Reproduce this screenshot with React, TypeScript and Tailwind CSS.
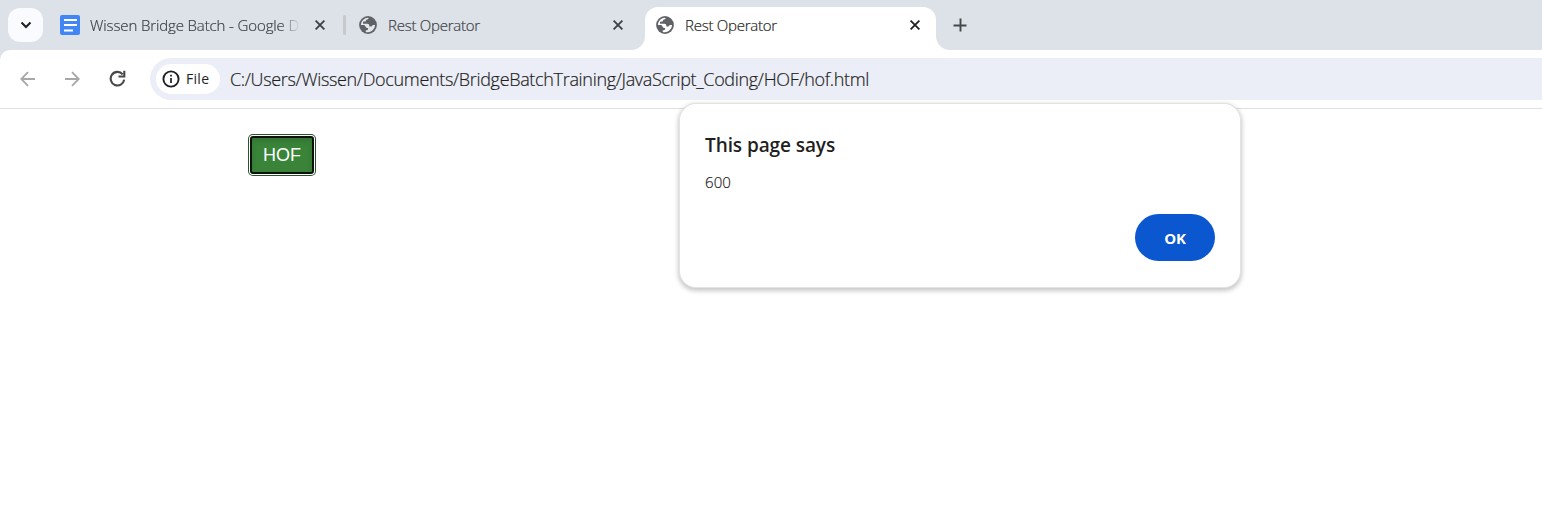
function Globe({ className }: { className: string }) {
  return (
    <svg width="18" height="18" viewBox="0 0 18 18" className={`block shrink-0 ${className}`}>
      <circle cx="9" cy="9" r="8.9" fill="#5f6368" />
      <path
        d="M9.7 1.9C9.2 3 8.600 3.500 7.400 3.700c-.6.2-.6 1-.6 1.900H5c-.7 0-1 .5-1 1.200v.9h4.300c1.500 0 2 .8 2 1.900v.9h1.800c1 0 1.400-.5 1.400-1.400h2.600A7.200 7.200 0 0 1 6.800 15.900v-1.700h1c1 0 1.300-.6 1.300-1.400V12c-1.700 0-2.500-.6-2.700-1.800L5.300 9H1.800A7.200 7.200 0 0 1 9.700 1.900z"
        fill="currentColor"
      />
    </svg>
  );
}

function Close({ className }: { className: string }) {
  return (
    <svg width="10" height="10" viewBox="0 0 10 10" className={`block shrink-0 ${className}`}>
      <path d="M.6.6l8.800 8.800M9.400.6L.6 9.400" stroke="currentColor" strokeWidth="1.800" />
    </svg>
  );
}

function TabStrip() {
  return (
    <header className="flex h-[50px] shrink-0 bg-[#dde1e8] text-[15px] leading-6 whitespace-nowrap text-[#3c3f42]">
      <button className="ml-2 mt-2 flex h-[34px] w-[35px] items-center justify-center rounded-xl bg-[#f9fbff]">
        <svg width="12" height="8" viewBox="0 0 12 8">
          <path d="M1.500 1.500L6 6l4.500-4.500" fill="none" stroke="#1f1f1f" strokeWidth="2" />
        </svg>
      </button>
      <div className="ml-[17px] flex h-[50px] w-[286px] items-center">
        <svg width="20" height="20" viewBox="0 0 20 20" className="shrink-0">
          <rect width="20" height="20" rx="2" fill="#4285f4" />
          <path d="M4 5h13M4 10h13M4 15.500h9" stroke="white" strokeWidth="2" />
        </svg>
        <span className="ml-[10px] w-[210px] shrink-0 font-light tracking-[-0.12px] [-webkit-text-stroke:0.2px] [mask-image:linear-gradient(to_right,black_190px,transparent_210px)]">
          Wissen Bridge Batch - Google D
        </span>
        <Close className="ml-[15px]" />
        <span className="ml-[18px] h-5 w-[3px] shrink-0 rounded bg-[#c8c9cb]" />
      </div>
      <div className="ml-[13px] flex h-[50px] w-[286px] items-center">
        <Globe className="text-[#e4e7eb]" />
        <span className="ml-[11px] font-light tracking-[-0.25px] [-webkit-text-stroke:0.2px]">Rest Operator</span>
        <Close className="ml-auto mr-[22px]" />
      </div>
      <div className="relative mt-[7px] flex h-[43px] w-[291px] items-center rounded-t-[13px] bg-white pb-[7px] pl-[11px]">
        <svg width="14" height="14" className="absolute -left-[14px] bottom-0">
          <path d="M14 0v14H0A14 14 0 0 0 14 0z" fill="white" />
        </svg>
        <Globe className="text-white" />
        <span className="ml-[11px] font-light tracking-[-0.25px] text-[#1f1f1f] [-webkit-text-stroke:0.2px]">Rest Operator</span>
        <Close className="ml-auto mr-4 text-[#202124]" />
        <svg width="14" height="14" className="absolute -right-[14px] bottom-0">
          <path d="M0 0v14h14A14 14 0 0 1 0 0z" fill="white" />
        </svg>
      </div>
      <svg width="14" height="14" viewBox="0 0 14 14" className="ml-[17px] mt-[18px]">
        <path d="M7.500 .5v13M.5 7.500h13" stroke="#45484b" strokeWidth="1.900" />
      </svg>
    </header>
  );
}

function Toolbar() {
  return (
    <div className="bg-[#dde1e8]">
      <nav className="flex h-[59px] items-start rounded-tl-[10px] border-b border-[#dfe0e1] bg-white pt-2">
        <svg width="16" height="16" viewBox="0 0 16 16" className="ml-5 mt-[13px]">
          <path d="M15 8H1.500M8 1.200L1.300 8 8 14.800" fill="none" stroke="#a8a8a8" strokeWidth="1.800" />
        </svg>
        <svg width="16" height="16" viewBox="0 0 16 16" className="ml-[28px] mt-[13px]">
          <path d="M1 8h13.500M8 1.200L14.700 8 8 14.800" fill="none" stroke="#a8a8a8" strokeWidth="1.800" />
        </svg>
        <svg width="17" height="17" viewBox="0 0 17 17" className="ml-[29px] mt-3">
          <path d="M13.700 4.300A6.800 6.800 0 1 0 15.200 9.700M15.300.7v5.800H9.500" fill="none" stroke="#474747" strokeWidth="2.100" />
        </svg>
        <div className="ml-6 flex h-[42px] flex-1 items-center rounded-l-full bg-[#ebeef7] pl-[6px] whitespace-nowrap text-[#1f1f1f]">
          <div className="flex h-[30px] w-16 shrink-0 items-center rounded-full bg-white pl-[6px]">
            <svg width="18" height="18" viewBox="0 0 18 18" className="shrink-0">
              <circle cx="9" cy="9" r="7.600" fill="none" stroke="#1f1f1f" strokeWidth="1.900" />
              <path d="M9 8v5M9 4.800v1.700" stroke="#1f1f1f" strokeWidth="1.700" />
            </svg>
            <span className="ml-[6px] text-sm leading-6 font-medium tracking-[0.3px]">File</span>
          </div>
          <span className="ml-[10px] text-[18px] leading-6 font-light tracking-[-0.325px] [-webkit-text-stroke:0.2px]">
            C:/Users/Wissen/Documents/BridgeBatchTraining/JavaScript_Coding/HOF/hof.html
          </span>
        </div>
      </nav>
    </div>
  );
}

function AlertDialog() {
  return (
    <div
      role="dialog"
      className="absolute left-[680px] top-[104px] flex h-[183px] w-[560px] flex-col rounded-2xl bg-white px-[25px] pt-[29px] text-[#1f1f1f] shadow-[0_0_0_1px_#e2e4e4,0_2px_4px_2px_rgba(60,64,67,0.28)]"
    >
      <h1 className="text-[19px] leading-6 font-semibold tracking-[-0.08px]">This page says</h1>
      <p className="mt-[13px] text-[15px] leading-6 font-light tracking-[0.1px] [-webkit-text-stroke:0.2px]">600</p>
      <button className="mt-5 flex h-[47px] w-20 items-center justify-center self-end rounded-full bg-[#0b57d0] pt-px text-[15px] font-bold tracking-[-0.2px] text-white">
        OK
      </button>
    </div>
  );
}

export default function App() {
  return (
    <div className="relative flex h-[528px] w-full flex-col overflow-hidden bg-white font-['Open_Sans','Noto_Sans',sans-serif]">
      <TabStrip />
      <Toolbar />
      <main className="flex-1 pl-[250px] pt-[27px]">
        <button className="flex h-[38px] w-16 items-center justify-center rounded-[3px] border-2 border-[#101010] bg-[#398439] font-['Liberation_Sans',sans-serif] text-[18px] text-white shadow-[0_0_0_1px_white,0_0_0_2px_#255625,inset_0_3px_5px_rgba(0,0,0,0.125)]">
          HOF
        </button>
      </main>
      <AlertDialog />
    </div>
  );
}
